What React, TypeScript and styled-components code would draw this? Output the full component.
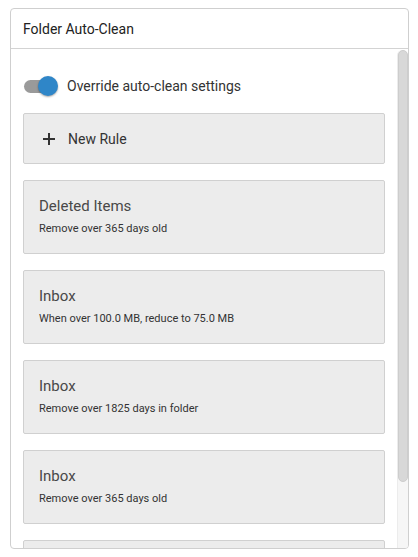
import styled, { createGlobalStyle } from "styled-components";

const GlobalStyle = createGlobalStyle`
  html, body {
    margin: 0;
    padding: 0;
    background: #ffffff;
    font-family: Roboto, "Liberation Sans", Arial, sans-serif;
  }
`;

const Page = styled.div`
  padding: 8px 9px 8px 10px;
`;

const Panel = styled.div`
  width: 399px;
  height: 541px;
  box-sizing: border-box;
  border: 1px solid #cfcfcf;
  border-radius: 4px;
  display: flex;
  flex-direction: column;
  overflow: hidden;
  background: #fff;
`;

const Header = styled.div`
  height: 40px;
  flex: none;
  box-sizing: border-box;
  border-bottom: 1px solid #d3d3d3;
  display: flex;
  align-items: center;
  padding: 0 12px;
  font-size: 14px;
  color: #222;
`;

const Body = styled.div`
  flex: 1;
  display: flex;
  min-height: 0;
`;

const Content = styled.div`
  flex: 1;
  overflow: hidden;
  padding: 27px 12px 0 12px;
  display: flex;
  flex-direction: column;
`;

const Scrollbar = styled.div`
  width: 10px;
  flex: none;
  margin-top: 1px;
  background: #f6f6f6;
  border-radius: 6px 6px 0 0;
  border-left: 1px solid #ececec;
`;

const Thumb = styled.div`
  height: 432px;
  background: #d8d8d8;
  border: 1px solid #cdcdcd;
  box-sizing: border-box;
  border-radius: 6px;
`;

const ToggleRow = styled.label`
  display: flex;
  align-items: center;
  height: 20px;
  gap: 9px;
  font-size: 14px;
  color: #333;
  margin-bottom: 17px;
`;

const Switch = styled.span`
  position: relative;
  width: 34px;
  height: 20px;
  flex: none;
  display: flex;
  align-items: center;
  margin-left: 1px;
`;

const Track = styled.span`
  width: 28px;
  height: 13px;
  border-radius: 7px;
  background: #9a9a9a;
`;

const Knob = styled.span`
  position: absolute;
  right: 0;
  top: 0;
  width: 20px;
  height: 20px;
  border-radius: 50%;
  background: #2f86c8;
  box-shadow: 0 1px 2px rgba(0, 0, 0, 0.35);
`;

const Card = styled.div<{ $height: number }>`
  flex: none;
  height: ${({ $height }) => $height}px;
  box-sizing: border-box;
  background: #ececec;
  border: 1px solid #d0d0d0;
  border-radius: 2px;
  margin-bottom: 16px;
`;

const NewRuleCard = styled(Card)`
  display: flex;
  align-items: center;
  padding-left: 19px;
  gap: 13px;
  font-size: 14px;
  color: #333;
`;

const RuleCard = styled(Card)`
  padding: 16px 15px 0;
`;

const RuleTitle = styled.div`
  font-size: 15px;
  line-height: 18px;
  color: #484848;
`;

const RuleDetail = styled.div`
  font-size: 11px;
  line-height: 14px;
  margin-top: 7px;
  color: #333;
`;

const rules = [
  { folder: "Deleted Items", detail: "Remove over 365 days old" },
  { folder: "Inbox", detail: "When over 100.0 MB, reduce to 75.0 MB" },
  { folder: "Inbox", detail: "Remove over 1825 days in folder" },
  { folder: "Inbox", detail: "Remove over 365 days old" },
];

function PlusIcon() {
  return (
    <svg width="12" height="12" viewBox="0 0 12 12">
      <path d="M6 0v12M0 6h12" stroke="#333" strokeWidth="2" />
    </svg>
  );
}

export default function App() {
  return (
    <Page>
      <GlobalStyle />
      <Panel>
        <Header>Folder Auto-Clean</Header>
        <Body>
          <Content>
            <ToggleRow>
              <Switch>
                <Track />
                <Knob />
              </Switch>
              Override auto-clean settings
            </ToggleRow>
            <NewRuleCard $height={51}>
              <PlusIcon />
              New Rule
            </NewRuleCard>
            {rules.map((r, i) => (
              <RuleCard key={i} $height={74}>
                <RuleTitle>{r.folder}</RuleTitle>
                <RuleDetail>{r.detail}</RuleDetail>
              </RuleCard>
            ))}
            {/* next rule, scrolled out of view */}
            <RuleCard $height={74} />
          </Content>
          <Scrollbar>
            <Thumb />
          </Scrollbar>
        </Body>
      </Panel>
    </Page>
  );
}
